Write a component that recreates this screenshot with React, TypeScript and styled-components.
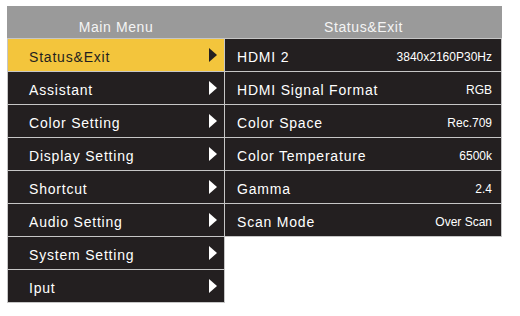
import React from 'react'
import styled, { createGlobalStyle } from 'styled-components'

const GlobalStyle = createGlobalStyle`
  body {
    margin: 0;
    background: #ffffff;
    font-family: "Liberation Sans", Arial, sans-serif;
  }
`

const Frame = styled.div`
  width: 495px;
  margin: 6px 0 0 7px;
`

const HeaderBar = styled.div`
  display: grid;
  grid-template-columns: 218px 277px;
  height: 32px;
  background: #9a9a9a;
`

const HeaderTitle = styled.div`
  display: flex;
  align-items: center;
  justify-content: center;
  padding-top: 9px;
  color: #f4f4f4;
  font-size: 14px;
  letter-spacing: 0.6px;
`

const Body = styled.div`
  display: flex;
  align-items: flex-start;
`

const Panel = styled.div<{ $width: number; $first?: boolean }>`
  display: flex;
  flex-direction: column;
  gap: 1px;
  width: ${p => p.$width}px;
  box-sizing: border-box;
  padding: ${p => (p.$first ? '1px' : '1px 1px 1px 0')};
  background: #c6c6c6;
`

const MenuRow = styled.div<{ $active?: boolean }>`
  display: flex;
  align-items: center;
  justify-content: space-between;
  height: 32px;
  padding: 3px 7px 0 21px;
  box-sizing: border-box;
  background: ${p => (p.$active ? '#f3c53c' : '#231f20')};
  color: ${p => (p.$active ? '#231f20' : '#ffffff')};
  font-size: 14px;
  letter-spacing: 0.8px;
`

const Arrow = styled.span<{ $active?: boolean }>`
  width: 0;
  height: 0;
  margin-top: -3px;
  border-top: 7px solid transparent;
  border-bottom: 7px solid transparent;
  border-left: 8px solid ${p => (p.$active ? '#231f20' : '#ffffff')};
`

const InfoRow = styled.div`
  display: flex;
  align-items: center;
  justify-content: space-between;
  height: 32px;
  padding: 3px 9px 0 12px;
  box-sizing: border-box;
  background: #231f20;
  color: #ffffff;
`

const InfoLabel = styled.span`
  font-size: 14px;
  letter-spacing: 0.8px;
`

const InfoValue = styled.span`
  font-size: 12px;
`

const menu = [
  'Status&Exit',
  'Assistant',
  'Color Setting',
  'Display Setting',
  'Shortcut',
  'Audio Setting',
  'System Setting',
  'Iput',
]

const status = [
  ['HDMI 2', '3840x2160P30Hz'],
  ['HDMI Signal Format', 'RGB'],
  ['Color Space', 'Rec.709'],
  ['Color Temperature', '6500k'],
  ['Gamma', '2.4'],
  ['Scan Mode', 'Over Scan'],
]

export default function App() {
  return (
    <>
      <GlobalStyle />
      <Frame>
        <HeaderBar>
          <HeaderTitle>Main Menu</HeaderTitle>
          <HeaderTitle>Status&amp;Exit</HeaderTitle>
        </HeaderBar>
        <Body>
          <Panel $width={218} $first>
            {menu.map((item, i) => (
              <MenuRow key={item} $active={i === 0}>
                <span>{item}</span>
                <Arrow $active={i === 0} />
              </MenuRow>
            ))}
          </Panel>
          <Panel $width={277}>
            {status.map(([label, value]) => (
              <InfoRow key={label}>
                <InfoLabel>{label}</InfoLabel>
                <InfoValue>{value}</InfoValue>
              </InfoRow>
            ))}
          </Panel>
        </Body>
      </Frame>
    </>
  )
}
